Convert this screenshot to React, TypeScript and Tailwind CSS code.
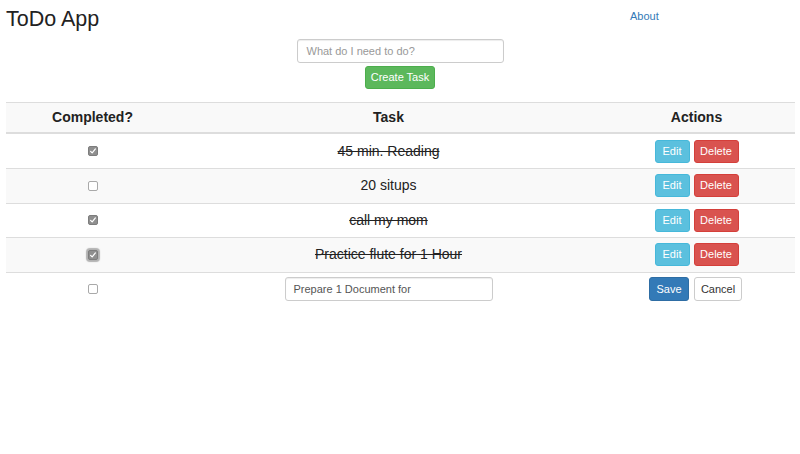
import React from "react";

const font = { fontFamily: '"Liberation Sans", Arial, Helvetica, sans-serif' };

function CheckBox({ checked, focused }: { checked?: boolean; focused?: boolean }) {
  if (checked) {
    return (
      <div
        className={
          "w-[10px] h-[10px] rounded-[2px] bg-[#8f8f8f] border border-[#7d7d7d] flex items-center justify-center " +
          (focused ? "shadow-[0_0_1px_2px_rgba(120,120,120,0.55)]" : "")
        }
      >
        <svg width="8" height="8" viewBox="0 0 8 8">
          <path d="M1.6 4.3 L3.2 5.9 L6.4 1.9" stroke="#ffffff" strokeWidth="1.2" fill="none" strokeLinecap="round" strokeLinejoin="round" />
        </svg>
      </div>
    );
  }
  return <div className="w-[10px] h-[10px] rounded-[2px] bg-white border border-[#a9a9a9]" />;
}

function ActionButtons() {
  return (
    <div className="flex items-center gap-[4px]">
      <button className="w-[35px] h-[23px] rounded-[3px] bg-[#5bc0de] border border-[#46b8da] text-white text-[11px] leading-none">
        Edit
      </button>
      <button className="w-[45px] h-[23px] rounded-[3px] bg-[#d9534f] border border-[#d43f3a] text-white text-[11px] leading-none">
        Delete
      </button>
    </div>
  );
}

const rows = [
  { text: "45 min. Reading", done: true, bg: "bg-white" },
  { text: "20 situps", done: false, bg: "bg-[#f9f9f9]" },
  { text: "call my mom", done: true, bg: "bg-white" },
  { text: "Practice flute for 1 Hour", done: true, bg: "bg-[#f9f9f9]", focused: true },
];

export default function App() {
  return (
    <div className="w-[800px] h-[454px] bg-white text-[#333333] overflow-hidden" style={font}>
      <div className="flex items-start pt-[8px] pl-[6px]">
        <div className="w-[624px] text-[21.5px] leading-[23px] text-[#222222]">ToDo App</div>
        <a className="mt-[1px] text-[11px] leading-[14px] text-[#337ab7]">About</a>
      </div>
      <div className="flex flex-col items-center mt-[8px]">
        <div className="w-[207px] h-[24px] rounded-[3px] border border-[#cccccc] bg-white flex items-center pl-[9px] text-[11px] text-[#999999] shadow-[inset_0_1px_1px_rgba(0,0,0,0.075)]">
          What do I need to do?
        </div>
        <button className="mt-[3px] w-[70px] h-[23px] rounded-[3px] bg-[#5cb85c] border border-[#4cae4c] text-white text-[11px] leading-none">
          Create Task
        </button>
      </div>
      <div className="ml-[6px] mt-[13px] w-[789px]">
        <div className="grid grid-cols-[173px_419px_197px] h-[32px] bg-[#f9f9f9] border-t border-b-2 border-[#dddddd] items-center text-[14px] font-bold text-[#222222]">
          <div className="text-center">Completed?</div>
          <div className="text-center">Task</div>
          <div className="text-center">Actions</div>
        </div>
        {rows.map((r, i) => (
          <div
            key={i}
            className={
              "grid grid-cols-[173px_419px_197px] items-center " +
              r.bg +
              (i === 0 ? " h-[34px]" : " h-[34.5px] border-t border-[#dddddd]")
            }
          >
            <div className="flex justify-center">
              <CheckBox checked={r.done} focused={r.focused} />
            </div>
            <div className={"text-center text-[14px] text-[#222222] " + (r.done ? "line-through" : "")}>{r.text}</div>
            <div className="flex justify-center">
              <ActionButtons />
            </div>
          </div>
        ))}
        <div className="grid grid-cols-[173px_419px_197px] h-[34.5px] items-center border-t border-[#dddddd] bg-white">
          <div className="flex justify-center">
            <CheckBox />
          </div>
          <div className="flex justify-center">
            <div className="w-[208px] h-[24px] rounded-[3px] border border-[#cccccc] bg-white flex items-center pl-[8px] text-[11px] text-[#555555] shadow-[inset_0_1px_1px_rgba(0,0,0,0.075)]">
              Prepare 1 Document for
            </div>
          </div>
          <div className="flex justify-center">
            <div className="flex items-center gap-[5px] ml-[-2px]">
              <button className="w-[40px] h-[24px] rounded-[3px] bg-[#337ab7] border border-[#2e6da4] text-white text-[11px] leading-none">
                Save
              </button>
              <button className="w-[48px] h-[24px] rounded-[3px] bg-white border border-[#cccccc] text-[#333333] text-[11px] leading-none">
                Cancel
              </button>
            </div>
          </div>
        </div>
      </div>
    </div>
  );
}
